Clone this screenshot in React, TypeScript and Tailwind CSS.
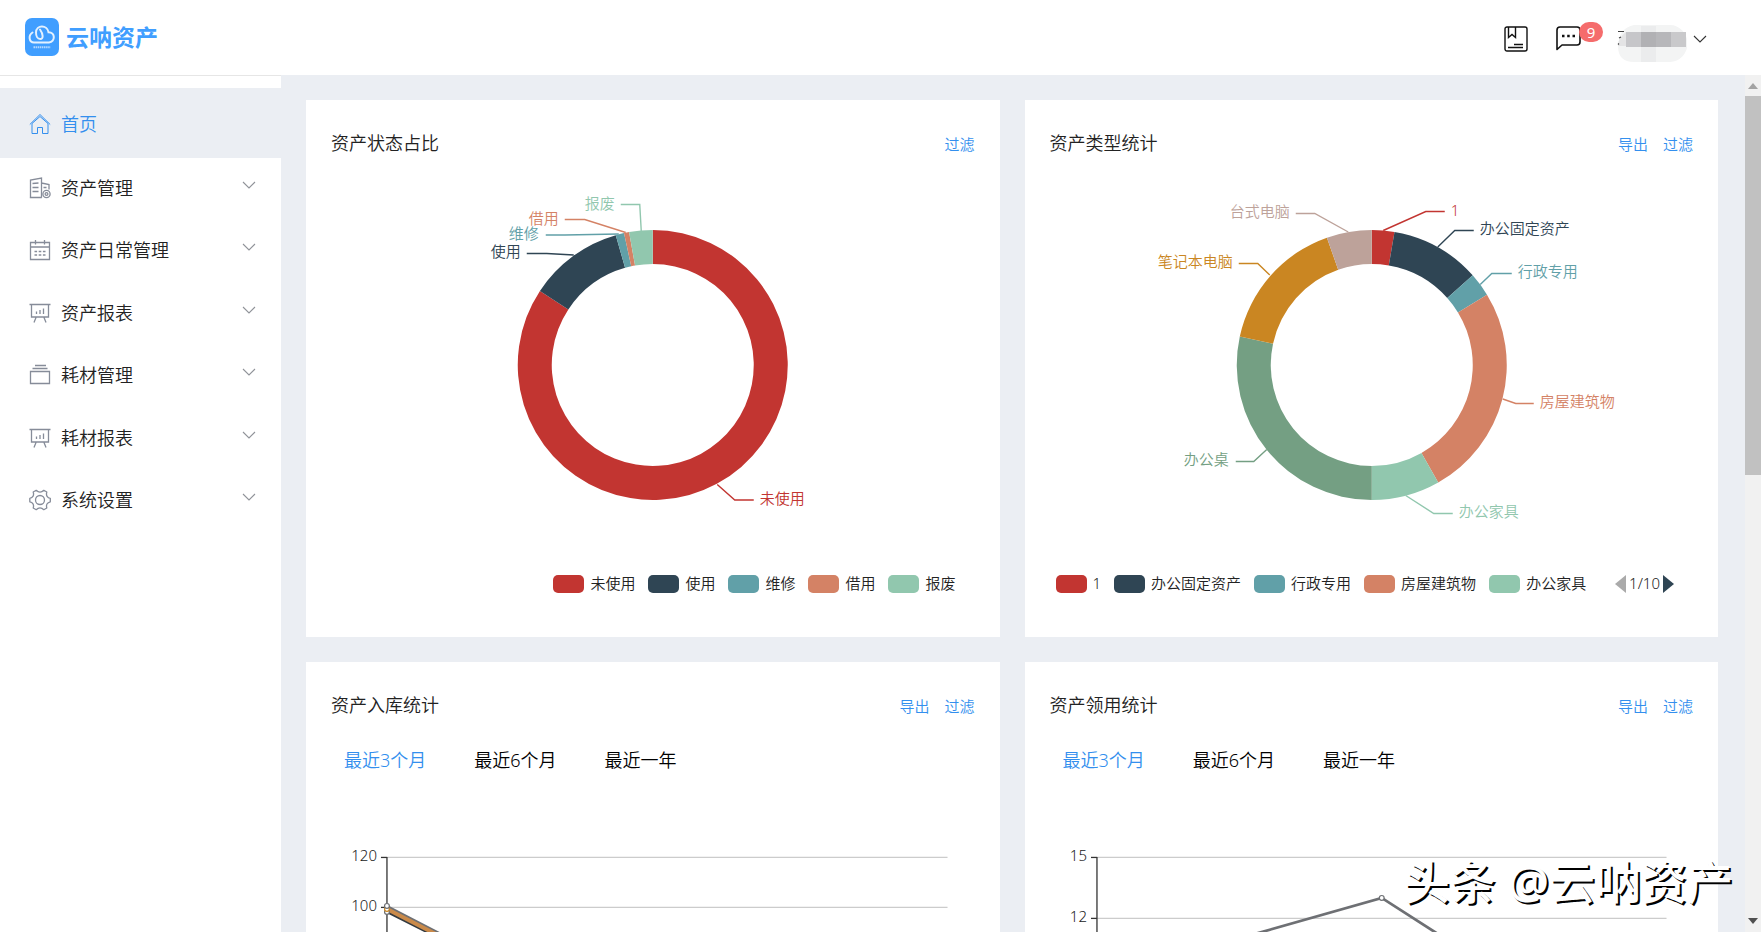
import type { ReactNode } from "react";

type Slice = {
  name: string;
  color: string;
  to: number;
  line: string;
  x: number;
  y: number;
  end?: boolean;
};

const statusSlices: Slice[] = [
  { name: "未使用", color: "#c23531", to: 303.3, line: "64.5,119.5 82,135 101,135", x: 107, y: 134 },
  { name: "使用", color: "#2f4554", to: 344.1, line: "-79,-110 -106,-111.5 -126,-111.5", x: -132, y: -113, end: true },
  { name: "维修", color: "#61a0a8", to: 347.7, line: "-34,-131 -88,-130 -107,-130", x: -114, y: -131, end: true },
  { name: "借用", color: "#d48265", to: 349.9, line: "-27,-132.5 -68,-145.5 -88,-145.5", x: -94, y: -146, end: true },
  { name: "报废", color: "#91c7ae", to: 360, line: "-11.5,-134 -13,-160.5 -32,-160.5", x: -38, y: -161, end: true },
];

const typeSlices: Slice[] = [
  { name: "1", color: "#c23531", to: 9.7, line: "11.5,-134.5 54,-153.5 73,-153.5", x: 79, y: -154 },
  { name: "办公固定资产", color: "#2f4554", to: 48.4, line: "66,-118 83,-134.5 102,-134.5", x: 108, y: -136 },
  { name: "行政专用", color: "#61a0a8", to: 58.6, line: "108.5,-80.5 120,-91.5 140,-91.5", x: 146, y: -93 },
  { name: "房屋建筑物", color: "#d48265", to: 150.5, line: "131,34 144,38.5 162,38.5", x: 168, y: 37 },
  { name: "办公家具", color: "#91c7ae", to: 180, line: "34,130.5 62,148.5 81,148.5", x: 87, y: 147 },
  { name: "办公桌", color: "#749f83", to: 282.2, line: "-105,84.5 -118,96.5 -136,96.5", x: -143, y: 95, end: true },
  { name: "笔记本电脑", color: "#ca8622", to: 340.6, line: "-102,-90 -114,-101.5 -133,-101.5", x: -139, y: -103, end: true },
  { name: "台式电脑", color: "#bda29a", to: 360, line: "-23.5,-133 -57,-151.5 -76,-151.5", x: -82, y: -153, end: true },
];

function arc(from: number, to: number) {
  const R = 135;
  const r = 101;
  const pt = (deg: number, rad: number) => {
    const a = (deg * Math.PI) / 180;
    return `${(Math.sin(a) * rad).toFixed(2)} ${(-Math.cos(a) * rad).toFixed(2)}`;
  };
  const large = to - from > 180 ? 1 : 0;
  return `M${pt(from, R)} A${R} ${R} 0 ${large} 1 ${pt(to, R)} L${pt(to, r)} A${r} ${r} 0 ${large} 0 ${pt(from, r)} Z`;
}

function Donut({ slices }: { slices: Slice[] }) {
  return (
    <svg viewBox="-300 -190 600 360" className="block h-[360px] w-full">
      {slices.map((s, i) => (
        <g key={s.name}>
          <path d={arc(i ? slices[i - 1].to : 0, s.to)} fill={s.color} />
          <polyline points={s.line} fill="none" stroke={s.color} strokeWidth="1.4" />
          <text x={s.x} y={s.y + 5} fill={s.color} textAnchor={s.end ? "end" : "start"} className="text-[15px]">
            {s.name}
          </text>
        </g>
      ))}
    </svg>
  );
}

function Legend({ slices }: { slices: Slice[] }) {
  return (
    <ul className="flex items-center gap-[13px]">
      {slices.map((s) => (
        <li key={s.name} className="flex items-center gap-1.5 text-[15px] text-[#222]">
          <span className="h-[18px] w-[31px] rounded-[5px]" style={{ backgroundColor: s.color }} />
          {s.name}
        </li>
      ))}
    </ul>
  );
}

function Card({ title, actions, children }: { title: string; actions: string[]; children: ReactNode }) {
  return (
    <section className="min-w-0 bg-white">
      <header className="flex h-[75px] items-baseline justify-between px-[25px] pt-[30px]">
        <h2 className="text-lg leading-[26px] text-[#222]">{title}</h2>
        <div className="flex gap-[15px]">
          {actions.map((a) => (
            <button key={a} type="button" className="text-[15px] text-[#338fee]">
              {a}
            </button>
          ))}
        </div>
      </header>
      {children}
    </section>
  );
}

function Tabs() {
  return (
    <div className="flex h-[46px] items-center gap-12 px-[38px] text-lg text-black">
      <button type="button" className="text-[#338fee]">最近3个月</button>
      <button type="button">最近6个月</button>
      <button type="button">最近一年</button>
    </div>
  );
}

function Axis({ left, right, step, labels }: { left: number; right: number; step: number; labels: number[] }) {
  return (
    <g>
      {labels.map((v, i) => {
        const y = Math.round(74 + i * step) + 0.5;
        return (
          <g key={v}>
            <line x1={left} x2={right} y1={y} y2={y} stroke="#ccc" strokeWidth="1.3" />
            <line x1={left - 6} x2={left} y1={y} y2={y} stroke="#333" strokeWidth="1.3" />
            <text x={left - 10} y={y + 4} textAnchor="end" fill="#222" className="text-[15px]">
              {v}
            </text>
          </g>
        );
      })}
      <line x1={left} x2={left} y1="74" y2="379" stroke="#333" strokeWidth="1.3" />
    </g>
  );
}

function StockChart() {
  return (
    <svg viewBox="0 0 694 160" className="block w-full">
      <Axis left={81} right={642} step={50} labels={[120, 100]} />
      <g fill="none">
        <polyline points="81,128 362,270 642,330" stroke="#333a40" strokeWidth="4" />
        <polyline points="81,124 362,270 642,330" stroke="#6e7074" strokeWidth="4" />
        <polyline points="81,126 362,271 642,330" stroke="#ca8a4a" strokeWidth="4" />
      </g>
      <g fill="#fff" stroke="#6e7074" strokeWidth="1.2">
        <circle cx="81" cy="129" r="2.4" />
        <circle cx="81" cy="126" r="2.4" stroke="#ca8622" />
        <circle cx="81" cy="123" r="2.4" />
      </g>
    </svg>
  );
}

function UsageChart() {
  return (
    <svg viewBox="0 0 694 160" className="block w-full">
      <Axis left={72} right={642} step={61} labels={[15, 12]} />
      <polyline points="72,196 357,115 642,298" fill="none" stroke="#6e7074" strokeWidth="2.8" />
      <circle cx="357" cy="115" r="2.4" fill="#fff" stroke="#6e7074" strokeWidth="1.2" />
    </svg>
  );
}

function Icon({ children }: { children: ReactNode }) {
  return (
    <svg viewBox="0 0 22 22" className="size-[22px] shrink-0" fill="none" stroke="currentColor" strokeWidth="1.3">
      {children}
    </svg>
  );
}

const boardIcon = (
  <Icon>
    <path d="M.5 2.500h21M2.500 2.500v12.500h17V2.500M7 15.500 5 20.500M15 15.500l2 5M7.500 9.500v2.500M11 8v4M14.500 6.500v5.500" />
  </Icon>
);

const menus = [
  {
    label: "资产管理",
    icon: (
      <Icon>
        <path d="M1.500 20.500V3l11-2v19.500M.8 20.500h12M3.500 6.500l6-.5M3.500 10.500h6M3.500 14.500h6M12.500 6l7.500 1.500v5M14.500 10.500h3" />
        <circle cx="17.500" cy="17" r="3.600" />
        <circle cx="17.500" cy="17" r="1.400" />
      </Icon>
    ),
  },
  {
    label: "资产日常管理",
    icon: (
      <Icon>
        <path d="M1.500 3.500h19v17h-19zM1.500 8h19M6.500 1v4.500M15.500 1v4.500" />
        <path d="M5.500 12.500h11M5.500 16h11" strokeDasharray="2.600 1.600" />
      </Icon>
    ),
  },
  { label: "资产报表", icon: boardIcon },
  {
    label: "耗材管理",
    icon: (
      <Icon>
        <path d="M1.500 7.500h19v12h-19zM3.500 4.500h15M6 1.500h11" />
      </Icon>
    ),
  },
  { label: "耗材报表", icon: boardIcon },
  {
    label: "系统设置",
    icon: (
      <Icon>
        <path
          d="M7.200 1.300Q9 3.200 11 3.200t3.800-1.900l3 1.700q-.8 2.600.3 4.300t3.200 2v3.500q-2.400.5-3.300 2.200t-.2 4l-3 1.700Q13 18.800 11 18.800t-3.800 1.900l-3-1.700q.8-2.600-.2-4.200T.8 12.800V9.300q2.400-.5 3.300-2.200T4.200 3z"
          strokeLinejoin="round"
        />
        <circle cx="11" cy="11" r="4.500" />
      </Icon>
    ),
  },
];

function Chevron({ className }: { className: string }) {
  return (
    <svg viewBox="0 0 14 8" className={className} fill="none" stroke="currentColor" strokeWidth="1.1">
      <path d="M1 1l6 6 6-6" />
    </svg>
  );
}

function TopBar() {
  return (
    <header className="flex h-[75px] shrink-0 items-center justify-between bg-white pr-[54px] pl-[25px]">
      <a href="#" className="flex items-center gap-[7px] pb-0.5">
        <svg viewBox="0 0 34 38" className="h-[38px] w-[34px]" fill="none">
          <rect width="34" height="38" rx="7" fill="#409eff" />
          <path
            d="M7.500 14.500c-4.500 3-3.500 10 1.500 10h15c6.500-.8 6.500-10.300-.5-10.300-1-7.500-12.300-8-12.500.3 0 3.500 1.500 6.600 4.200 6.600 3.500 0 3-5.100-.2-9.600"
            stroke="#e3f1ff"
            strokeWidth="2"
            strokeLinecap="round"
          />
          <path d="M8.500 29.300h17" stroke="#b3d8ff" strokeWidth="2" strokeDasharray="1.500 .6" />
        </svg>
        <span className="text-[23px] leading-8 font-semibold text-[#409eff]">云呐资产</span>
      </a>
      <div className="flex items-center pt-0.5">
        <button type="button" aria-label="手册">
          <svg viewBox="0 0 24 26" className="h-[26px] w-6" fill="none" stroke="#111" strokeWidth="1.400">
            <rect x="1" y="1" width="22" height="24" rx="2" />
            <path d="M4.500 1v10.500L8 8.500l3.500 3V1M4 21.500h15M10 18.500h9" />
          </svg>
        </button>
        <button type="button" aria-label="消息" className="relative ml-7">
          <svg viewBox="0 0 25 25" className="size-[25px]" fill="none" stroke="#111" strokeWidth="1.600">
            <path d="M1 23.500V4q0-3 3-3h17q3 0 3 3v12q0 3-3 3H6z" strokeLinejoin="round" />
            <path d="M6 10h2.500M11.200 10h2.500M16.500 10H19" strokeWidth="2.400" />
          </svg>
          <span className="absolute -top-1 left-[23px] flex h-5 w-6 items-center justify-center rounded-full bg-[#f56c6c] text-[15px] font-normal text-white">
            9
          </span>
        </button>
        <button type="button" aria-label="账户" className="ml-9 flex items-center gap-1.5">
          <svg viewBox="0 -8 70 46" className="h-[46px] w-[70px]">
            <path d="M17 1h36a17 18 0 0 1 0 37H17Q1 38 1 22 2 4 17 1z" fill="#f3f4f4" />
            <path d="M24 2h15v36H24z" fill="#ebeced" />
            <path d="M1 22q0-8 8-14v14z" fill="#e4e4e5" />
            <path d="M9 8h15v15H9z" fill="#c6c6c9" />
            <path d="M24 8h15v15H24z" fill="#b1b1b4" />
            <path d="M39 8h15v15H39z" fill="#b7b7ba" />
            <path d="M54 8h15v15H54z" fill="#c9c9cb" />
            <path d="M1 7.500h6M2 14l2-1M1 20.500l1-1" stroke="#444" strokeWidth="1.200" />
          </svg>
          <Chevron className="h-2 w-3.5 text-[#333]" />
        </button>
      </div>
    </header>
  );
}

function Sidebar() {
  return (
    <nav className="w-[281px] shrink-0 border-t border-[#e6e6e6] bg-white pt-3 text-lg text-[#222]">
      <a href="#" className="flex h-[70px] items-center gap-2.5 bg-[#ebeef3] px-[29px] pt-0.5 text-[#338fee]">
        <Icon>
          <path d="M.8 11.500 11 1.500l10.200 10M3 10.500v10h5.500v-6h5v6H19v-10L11 3.500z" strokeWidth="1" />
        </Icon>
        首页
      </a>
      <ul className="grid h-[375px] grid-rows-6">
        {menus.map((m) => (
          <li key={m.label}>
            <button type="button" className="flex size-full items-center gap-2.5 px-[29px] pb-[3px] text-left">
              <span className="text-[#868c99]">{m.icon}</span>
              <span className="flex-1">{m.label}</span>
              <Chevron className="mr-[-4px] mb-1.5 h-2 w-3.5 text-[#909399]" />
            </button>
          </li>
        ))}
      </ul>
    </nav>
  );
}

function Scrollbar() {
  return (
    <div className="flex w-4 shrink-0 flex-col items-center bg-[#f1f1f1] py-2">
      <svg viewBox="0 0 10 6" className="h-1.5 w-2.5" fill="#a3a3a3">
        <path d="M0 6l5-6 5 6z" />
      </svg>
      <div className="w-full flex-1 py-[7px]">
        <div className="h-[46.500%] bg-[#c1c1c1]" />
      </div>
      <svg viewBox="0 0 10 6" className="h-1.5 w-2.5" fill="#505050">
        <path d="M0 0l5 6 5-6z" />
      </svg>
    </div>
  );
}

export default function App() {
  return (
    <div className="relative flex h-screen flex-col overflow-hidden bg-[#ebeef3] font-['Noto_Sans','Noto_Sans_CJK_SC',sans-serif] font-[350]">
      <TopBar />
      <div className="flex min-h-0 flex-1">
        <Sidebar />
        <main className="grid min-w-0 flex-1 grid-cols-2 content-start gap-[25px] overflow-hidden pt-[25px] pr-[27px] pl-[25px]">
          <Card title="资产状态占比" actions={["过滤"]}>
            <Donut slices={statusSlices} />
            <div className="mb-[5px] flex h-[97px] items-center justify-end pr-11">
              <Legend slices={statusSlices} />
            </div>
          </Card>
          <Card title="资产类型统计" actions={["导出", "过滤"]}>
            <Donut slices={typeSlices} />
            <div className="mb-[5px] flex h-[97px] items-center justify-between pr-11 pl-[31px]">
              <Legend slices={typeSlices.slice(0, 5)} />
              <div className="flex items-center gap-[3px] text-[15px] text-[#222]">
                <button type="button" aria-label="上一页">
                  <svg viewBox="0 0 11 18" className="h-[18px] w-[11px]" fill="#aaa">
                    <path d="M11 0v18L0 9z" />
                  </svg>
                </button>
                1/10
                <button type="button" aria-label="下一页">
                  <svg viewBox="0 0 11 18" className="h-[18px] w-[11px]" fill="#2f4554">
                    <path d="M0 0v18l11-9z" />
                  </svg>
                </button>
              </div>
            </div>
          </Card>
          <Card title="资产入库统计" actions={["导出", "过滤"]}>
            <Tabs />
            <StockChart />
          </Card>
          <Card title="资产领用统计" actions={["导出", "过滤"]}>
            <Tabs />
            <UsageChart />
          </Card>
        </main>
        <Scrollbar />
      </div>
      <div className="absolute right-7 bottom-[18px] text-[46px] leading-[66px] font-medium text-white [text-shadow:2px_2px_0_#000]">
        头条 @云呐资产
      </div>
    </div>
  );
}
